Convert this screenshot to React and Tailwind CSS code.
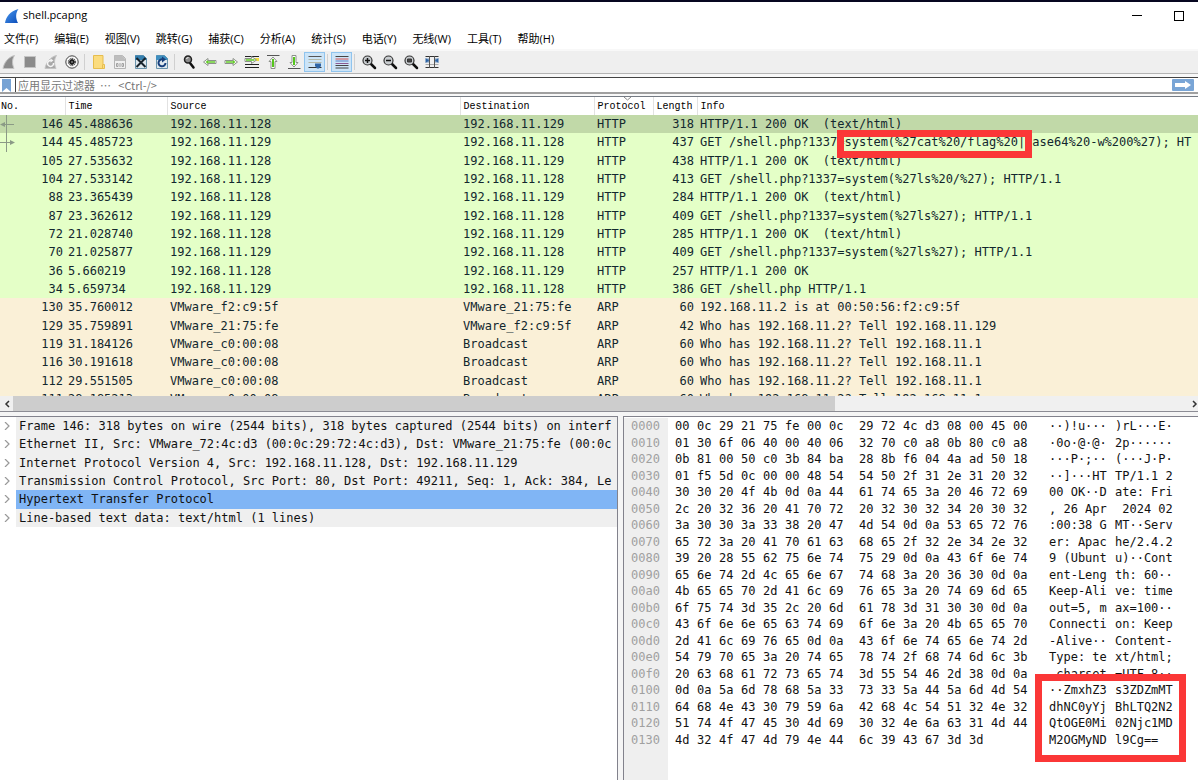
import React, { useState } from "react";
import clsx from "clsx";

const menus = [
  "文件(F)",
  "编辑(E)",
  "视图(V)",
  "跳转(G)",
  "捕获(C)",
  "分析(A)",
  "统计(S)",
  "电话(Y)",
  "无线(W)",
  "工具(T)",
  "帮助(H)",
];

const packets = [
  { no: 146, time: "45.488636", src: "192.168.11.128", dst: "192.168.11.129", proto: "HTTP", len: 318, info: "HTTP/1.1 200 OK  (text/html)" },
  {
    no: 144,
    time: "45.485723",
    src: "192.168.11.129",
    dst: "192.168.11.128",
    proto: "HTTP",
    len: 437,
    info: "GET /shell.php?1337",
    marked: "=system(%27cat%20/flag%20|b",
    rest: "ase64%20-w%200%27); HT",
  },
  { no: 105, time: "27.535632", src: "192.168.11.128", dst: "192.168.11.129", proto: "HTTP", len: 438, info: "HTTP/1.1 200 OK  (text/html)" },
  { no: 104, time: "27.533142", src: "192.168.11.129", dst: "192.168.11.128", proto: "HTTP", len: 413, info: "GET /shell.php?1337=system(%27ls%20/%27); HTTP/1.1" },
  { no: 88, time: "23.365439", src: "192.168.11.128", dst: "192.168.11.129", proto: "HTTP", len: 284, info: "HTTP/1.1 200 OK  (text/html)" },
  { no: 87, time: "23.362612", src: "192.168.11.129", dst: "192.168.11.128", proto: "HTTP", len: 409, info: "GET /shell.php?1337=system(%27ls%27); HTTP/1.1" },
  { no: 72, time: "21.028740", src: "192.168.11.128", dst: "192.168.11.129", proto: "HTTP", len: 285, info: "HTTP/1.1 200 OK  (text/html)" },
  { no: 70, time: "21.025877", src: "192.168.11.129", dst: "192.168.11.128", proto: "HTTP", len: 409, info: "GET /shell.php?1337=system(%27ls%27); HTTP/1.1" },
  { no: 36, time: "5.660219", src: "192.168.11.128", dst: "192.168.11.129", proto: "HTTP", len: 257, info: "HTTP/1.1 200 OK" },
  { no: 34, time: "5.659734", src: "192.168.11.129", dst: "192.168.11.128", proto: "HTTP", len: 386, info: "GET /shell.php HTTP/1.1" },
  { no: 130, time: "35.760012", src: "VMware_f2:c9:5f", dst: "VMware_21:75:fe", proto: "ARP", len: 60, info: "192.168.11.2 is at 00:50:56:f2:c9:5f" },
  { no: 129, time: "35.759891", src: "VMware_21:75:fe", dst: "VMware_f2:c9:5f", proto: "ARP", len: 42, info: "Who has 192.168.11.2? Tell 192.168.11.129" },
  { no: 119, time: "31.184126", src: "VMware_c0:00:08", dst: "Broadcast", proto: "ARP", len: 60, info: "Who has 192.168.11.2? Tell 192.168.11.1" },
  { no: 116, time: "30.191618", src: "VMware_c0:00:08", dst: "Broadcast", proto: "ARP", len: 60, info: "Who has 192.168.11.2? Tell 192.168.11.1" },
  { no: 112, time: "29.551505", src: "VMware_c0:00:08", dst: "Broadcast", proto: "ARP", len: 60, info: "Who has 192.168.11.2? Tell 192.168.11.1" },
  { no: 111, time: "28.185213", src: "VMware_c0:00:08", dst: "Broadcast", proto: "ARP", len: 60, info: "Who has 192.168.11.2? Tell 192.168.11.1" },
];

const details = [
  "Frame 146: 318 bytes on wire (2544 bits), 318 bytes captured (2544 bits) on interf",
  "Ethernet II, Src: VMware_72:4c:d3 (00:0c:29:72:4c:d3), Dst: VMware_21:75:fe (00:0c",
  "Internet Protocol Version 4, Src: 192.168.11.128, Dst: 192.168.11.129",
  "Transmission Control Protocol, Src Port: 80, Dst Port: 49211, Seq: 1, Ack: 384, Le",
  "Hypertext Transfer Protocol",
  "Line-based text data: text/html (1 lines)",
];

const dump = [
  ["0000", "00 0c 29 21 75 fe 00 0c 29 72 4c d3 08 00 45 00", "··)!u···", ")rL···E·"],
  ["0010", "01 30 6f 06 40 00 40 06 32 70 c0 a8 0b 80 c0 a8", "·0o·@·@·", "2p······"],
  ["0020", "0b 81 00 50 c0 3b 84 ba 28 8b f6 04 4a ad 50 18", "···P·;··", "(···J·P·"],
  ["0030", "01 f5 5d 0c 00 00 48 54 54 50 2f 31 2e 31 20 32", "··]···HT", "TP/1.1 2"],
  ["0040", "30 30 20 4f 4b 0d 0a 44 61 74 65 3a 20 46 72 69", "00 OK··D", "ate: Fri"],
  ["0050", "2c 20 32 36 20 41 70 72 20 32 30 32 34 20 30 32", ", 26 Apr", " 2024 02"],
  ["0060", "3a 30 30 3a 33 38 20 47 4d 54 0d 0a 53 65 72 76", ":00:38 G", "MT··Serv"],
  ["0070", "65 72 3a 20 41 70 61 63 68 65 2f 32 2e 34 2e 32", "er: Apac", "he/2.4.2"],
  ["0080", "39 20 28 55 62 75 6e 74 75 29 0d 0a 43 6f 6e 74", "9 (Ubunt", "u)··Cont"],
  ["0090", "65 6e 74 2d 4c 65 6e 67 74 68 3a 20 36 30 0d 0a", "ent-Leng", "th: 60··"],
  ["00a0", "4b 65 65 70 2d 41 6c 69 76 65 3a 20 74 69 6d 65", "Keep-Ali", "ve: time"],
  ["00b0", "6f 75 74 3d 35 2c 20 6d 61 78 3d 31 30 30 0d 0a", "out=5, m", "ax=100··"],
  ["00c0", "43 6f 6e 6e 65 63 74 69 6f 6e 3a 20 4b 65 65 70", "Connecti", "on: Keep"],
  ["00d0", "2d 41 6c 69 76 65 0d 0a 43 6f 6e 74 65 6e 74 2d", "-Alive··", "Content-"],
  ["00e0", "54 79 70 65 3a 20 74 65 78 74 2f 68 74 6d 6c 3b", "Type: te", "xt/html;"],
  ["00f0", "20 63 68 61 72 73 65 74 3d 55 54 46 2d 38 0d 0a", " charset", "=UTF-8··"],
  ["0100", "0d 0a 5a 6d 78 68 5a 33 73 33 5a 44 5a 6d 4d 54", "··ZmxhZ3", "s3ZDZmMT"],
  ["0110", "64 68 4e 43 30 79 59 6a 42 68 4c 54 51 32 4e 32", "dhNC0yYj", "BhLTQ2N2"],
  ["0120", "51 74 4f 47 45 30 4d 69 30 32 4e 6a 63 31 4d 44", "QtOGE0Mi", "02Njc1MD"],
  ["0130", "4d 32 4f 47 4d 79 4e 44 6c 39 43 67 3d 3d", "M2OGMyND", "l9Cg=="],
];

const Icon = ({ children }) => (
  <svg viewBox="0 0 16 16" className="h-4 w-4" fill="none">
    {children}
  </svg>
);

const FIN = "M1 15C2 9 6 3 14.500 1C11.500 5 11.500 10 14 15Z";
const ARROW_LEFT = "M1.500 8L6 4.500V6.500H14V9.500H6V11.500Z";
const ARROW_RIGHT = "M14.500 8L10 4.500V6.500H2V9.500H10V11.500Z";

const Lens = ({ children }) => (
  <Icon>
    <path d="M9.500 9.500L14 14" stroke="#111" strokeWidth="2.500" strokeLinecap="round" />
    <circle cx="6.500" cy="6.500" r="4.500" fill="#c9cdd0" stroke="#333" strokeWidth="1.200" />
    {children}
  </Icon>
);

const toolGroups = [
  [
    {
      label: "Start capture",
      icon: (
        <Icon>
          <path d="M2 14.500C3 9 7 3 13.500 1.500C11 5 11 10 13 14.500Z" fill="#8b8b8b" stroke="#c4c4c4" />
        </Icon>
      ),
    },
    {
      label: "Stop capture",
      icon: (
        <Icon>
          <rect x="2.500" y="2.500" width="11" height="11" fill="#8b8b8b" stroke="#c4c4c4" />
        </Icon>
      ),
    },
    {
      label: "Restart capture",
      icon: (
        <Icon>
          <path d="M2 14.500C3 9 7 3 13.500 1.500C11 5 11 10 13 14.500Z" fill="#a8a8a8" stroke="#c4c4c4" />
          <path d="M10.500 9A3 3 0 1 1 8 6.500" stroke="#f5f5f5" strokeWidth="1.500" />
          <path d="M7.500 4.500L10.500 6.500L7.500 8.500Z" fill="#f5f5f5" />
        </Icon>
      ),
    },
    {
      label: "Capture options",
      icon: (
        <Icon>
          <circle cx="8" cy="8" r="6.200" fill="#f8f8f8" stroke="#444" />
          <circle cx="8" cy="8" r="3.600" stroke="#222" strokeWidth="1" strokeDasharray="1.400 .9" />
          <circle cx="8" cy="8" r="2.400" fill="#1a1a1a" stroke="#1a1a1a" />
          <circle cx="8" cy="8" r="1.100" fill="#777" />
        </Icon>
      ),
    },
  ],
  [
    {
      label: "Open",
      icon: (
        <Icon>
          <path d="M2.500 1.500H12V10.500H13.500V14.500H2.500Z" fill="#fbdc7e" stroke="#e6bd4e" />
          <path d="M11.500 10.500V14" stroke="#e6bd4e" />
        </Icon>
      ),
    },
    {
      label: "Save",
      icon: (
        <Icon>
          <path d="M2.500 1.500H10.500L13.500 4.500V14.500H2.500Z" fill="#f0f0f0" stroke="#b5b5b5" />
          <path d="M2.500 1.500H10L13 4.500V7H2.500Z" fill="#bdbdbd" />
          <path d="M4.500 9.500h1.500v3h-1.500zM8 9v4M10 9.500h1.500v3h-1.500z" stroke="#a0a0a0" />
        </Icon>
      ),
    },
    {
      label: "Close",
      icon: (
        <Icon>
          <path d="M2.500 1.500H10.500L13.500 4.500V14.500H2.500Z" fill="#dfe8ee" stroke="#6a94ac" />
          <path d="M2 1.500H10.500L13.500 4.500V6H2Z" fill="#357fae" />
          <path d="M3.500 4L12.500 13M12.500 4L3.500 13" stroke="#18232b" strokeWidth="2" />
        </Icon>
      ),
    },
    {
      label: "Reload",
      icon: (
        <Icon>
          <path d="M2.500 1.500H10.500L13.500 4.500V14.500H2.500Z" fill="#dfe8ee" stroke="#6a94ac" />
          <path d="M2 1.500H10.500L13.500 4.500V6H2Z" fill="#3f8fc0" />
          <path d="M11.500 9A3.500 3.500 0 1 1 9 5.500" stroke="#173f7c" strokeWidth="2" />
          <path d="M8 2.500L12 5.500L8 8.500Z" fill="#173f7c" />
        </Icon>
      ),
    },
  ],
  [
    {
      label: "Find packet",
      icon: (
        <Icon>
          <path d="M9 9L12.500 13.500" stroke="#111" strokeWidth="2.500" strokeLinecap="round" />
          <circle cx="7" cy="5.500" r="3.500" fill="#8c8c8c" stroke="#222" strokeWidth="1.500" />
          <path d="M5.500 5A2 2 0 0 1 7.500 3.500" stroke="#f4f4f4" />
        </Icon>
      ),
    },
    {
      label: "Previous packet",
      icon: (
        <Icon>
          <path d={ARROW_LEFT} fill="#fff" stroke="#8b9089" />
          <path d="M3.500 8L6 6V7.200H13V8.800H6V10Z" fill="#63cc2a" />
        </Icon>
      ),
    },
    {
      label: "Next packet",
      icon: (
        <Icon>
          <path d={ARROW_RIGHT} fill="#fff" stroke="#8b9089" />
          <path d="M12.500 8L10 6V7.200H3V8.800H10V10Z" fill="#63cc2a" />
        </Icon>
      ),
    },
    {
      label: "Go to packet",
      icon: (
        <Icon>
          <path d="M1 2.500H15M1 10.500H15M1 13.500H15" stroke="#222" strokeWidth="1.200" />
          <path d="M10 5.500H15" stroke="#f2dc3c" strokeWidth="3" />
          <path d="M1 4.500H7.500V2.500L12.500 6L7.500 9.500V7.500H1Z" fill="#fff" stroke="#8b9089" />
          <path d="M2 6H10.500" stroke="#63cc2a" strokeWidth="1.600" />
        </Icon>
      ),
    },
    {
      label: "First packet",
      icon: (
        <Icon>
          <path d="M2 1.500H14.500" stroke="#555" />
          <path d="M8 3L12 7.500H10V14.500H6V7.500H4Z" fill="#fff" stroke="#8b9089" />
          <path d="M8 5V13" stroke="#55c61c" strokeWidth="2" />
        </Icon>
      ),
    },
    {
      label: "Last packet",
      icon: (
        <Icon>
          <path d="M2 14.500H14.500" stroke="#555" />
          <path d="M8 13L12 8.500H10V1.500H6V8.500H4Z" fill="#fff" stroke="#8b9089" />
          <path d="M8 3V11" stroke="#55c61c" strokeWidth="2" />
        </Icon>
      ),
    },
    {
      label: "Auto scroll",
      active: true,
      icon: (
        <Icon>
          <path d="M1.500 2.500H14.500" stroke="#555" />
          <path d="M1.500 5.500H14.500M1.500 8.500H14.500" stroke="#b4b8a8" />
          <path d="M1.500 13.500H14.500" stroke="#333" />
          <path d="M8 9.500H14V12L12 14.500H10L8 12Z" fill="#2f65a5" />
        </Icon>
      ),
    },
  ],
  [
    {
      label: "Colorize",
      active: true,
      icon: (
        <Icon>
          <path d="M1.500 2.500H14.500M1.500 11.500H14.500M1.500 14H14.500" stroke="#444" />
          <path d="M1.500 5H14.500" stroke="#d8504f" />
          <path d="M1.500 7H14.500" stroke="#5a80c6" />
          <path d="M1.500 9.500H14.500" stroke="#8a5b93" />
        </Icon>
      ),
    },
  ],
  [
    { label: "Zoom in", icon: <Lens><path d="M4 6.500H9M6.500 4V9" stroke="#111" strokeWidth="1.500" /></Lens> },
    { label: "Zoom out", icon: <Lens><path d="M4 6.500H9" stroke="#111" strokeWidth="1.500" /></Lens> },
    { label: "Normal size", icon: <Lens><path d="M4.500 5H8.500V8H4.500Z" fill="#444" stroke="#333" /></Lens> },
    {
      label: "Resize columns",
      icon: (
        <Icon>
          <path d="M1.500 2.500H14.500M1.500 13.500H14.500" stroke="#333" strokeWidth="1.200" />
          <path d="M1.500 10.500H14.500" stroke="#aaa" />
          <path d="M5.500 2V14M10.500 2V14" stroke="#555" />
          <path d="M1.500 4V9L5 6.500ZM14.500 4V9L11 6.500Z" fill="#2f65a5" />
          <path d="M2 4.500H5V8.500H2ZM11 4.500H14V8.500H11Z" fill="#2f65a5" opacity=".6" />
        </Icon>
      ),
    },
  ],
];

const TitleBar = () => (
  <header className="flex h-[29px] items-center justify-between border-t-2 border-[#070720] pl-1 font-['Open_Sans',sans-serif]">
    <div className="flex items-center gap-[3px]">
      <svg viewBox="0 0 16 16" className="h-4 w-4">
        <defs>
          <linearGradient id="fin" x1="0" y1="0" x2="1" y2="1">
            <stop offset="0" stopColor="#4d9bf0" />
            <stop offset="1" stopColor="#0b4cb8" />
          </linearGradient>
        </defs>
        <path d={FIN} fill="url(#fin)" />
      </svg>
      <h1 className="text-[11px]">shell.pcapng</h1>
    </div>
    <div className="flex items-center gap-6">
      <button aria-label="Minimize" className="flex h-6 w-5 items-center justify-center">
        <span className="h-px w-[10px] bg-black"></span>
      </button>
      <button aria-label="Maximize" className="flex h-6 w-[27px] items-center justify-start pl-[3px]">
        <span className="h-[10px] w-[10px] border border-black"></span>
      </button>
    </div>
  </header>
);

const MenuBar = () => (
  <nav className="flex h-5 items-center gap-4 pl-1 font-['Open_Sans','Noto_Sans_CJK_SC',sans-serif] text-[11px] leading-4">
    {menus.map((menu) => (
      <button key={menu} className="whitespace-nowrap">
        {menu}
      </button>
    ))}
  </nav>
);

const ToolBar = () => (
  <div role="toolbar" className="flex h-[25px] items-center border-t-2 border-b border-t-[#f8f8f8] border-b-[#b4b4b4] bg-[#efefef]">
    <div className="-ml-[2px] flex items-center">
      {toolGroups.map((group, i) => (
        <React.Fragment key={i}>
          {i > 0 && <span className="mx-[2px] h-4 w-[2px] border-l border-[#d0d0d0]"></span>}
          {group.map((tool) => (
            <button
              key={tool.label}
              aria-label={tool.label}
              className={clsx(
                "flex h-5 w-[21px] items-center justify-center",
                tool.active && "border border-[#90c4ee] bg-[#cce4f7]"
              )}
            >
              {tool.icon}
            </button>
          ))}
        </React.Fragment>
      ))}
    </div>
  </div>
);

const FilterBar = () => {
  const [filter, setFilter] = useState("");

  return (
    <div className="border-b border-[#757b84] bg-[#f8f8f8] pt-[3px] pb-[2px]">
      <form
        className="flex h-[17px] items-center border-t border-b-2 border-t-[#444] border-b-[#a0a0a0] bg-white pr-1"
        onSubmit={(e) => e.preventDefault()}
      >
        <button type="button" aria-label="Bookmarks" className="flex h-full w-4 items-center justify-center border-r border-[#444] pr-[2px]">
          <svg viewBox="0 0 9 13" className="h-[13px] w-[9px]">
            <path d="M0 0H9V13L4.500 9L0 13Z" fill="#77a3d4" />
          </svg>
        </button>
        <input
          type="text"
          aria-label="Display filter"
          value={filter}
          onChange={(e) => setFilter(e.target.value)}
          placeholder="应用显示过滤器  …   <Ctrl-/>"
          className="h-full min-w-0 flex-1 pl-[2px] font-['Noto_Sans_CJK_SC',sans-serif] text-[11px] placeholder-[#777] outline-none"
        />
        <button type="submit" aria-label="Apply filter" className="flex h-3 w-[22px] items-center justify-center rounded-[1px] bg-[#79a5d6]">
          <svg viewBox="0 0 16 8" className="h-2 w-4">
            <path d="M0 2H10V0L16 4L10 8V6H0Z" fill="#fff" />
          </svg>
        </button>
      </form>
    </div>
  );
};

const RelatedMarks = () => (
  <svg viewBox="0 0 15 37" className="absolute top-0 left-0 h-[37px] w-[15px]" fill="none">
    <path d="M6.500 0V37M2 9.500H14M0 27.500H11" stroke="#8b9a86" />
    <path d="M0 9.500L5 7V12ZM15 27.500L10 25V30Z" fill="#8b9a86" />
  </svg>
);

const PacketList = () => {
  const [selected, setSelected] = useState(146);

  return (
    <section className="border-b border-[#8c8c94]">
      <div className="h-[299px] overflow-hidden">
        <table className="w-full table-fixed border-collapse">
          <colgroup>
            <col className="w-[65px]" />
            <col className="w-[102px]" />
            <col className="w-[293px]" />
            <col className="w-[134px]" />
            <col className="w-[59px]" />
            <col className="w-[44px]" />
            <col />
          </colgroup>
          <thead>
            <tr className="h-[18px] text-left font-['Liberation_Mono',monospace] text-[10px] leading-4 [&>th]:p-0 [&>th]:pt-[2px] [&>th]:pl-[3px] [&>th]:font-normal [&>th+th]:border-l [&>th+th]:border-[#e2e2e2]">
              <th className="!pl-[1px]">No.</th>
              <th>Time</th>
              <th>Source</th>
              <th>Destination</th>
              <th className="relative">
                Protocol
                <svg viewBox="0 0 7 4" className="absolute top-0 left-1/2 h-1 w-[7px]" fill="none">
                  <path d="M0 0L3.500 3L7 0" stroke="#888" />
                </svg>
              </th>
              <th>Length</th>
              <th>Info</th>
            </tr>
          </thead>
        </table>
        {/* the row heights share the height of the table */}
        <table className="h-[293px] w-full table-fixed border-collapse font-['DejaVu_Sans_Mono',monospace] text-[12px] leading-4 text-[#12272e]">
          <colgroup>
            <col className="w-[65px]" />
            <col className="w-[102px]" />
            <col className="w-[293px]" />
            <col className="w-[134px]" />
            <col className="w-[59px]" />
            <col className="w-[44px]" />
            <col />
          </colgroup>
          <tbody>
            {packets.map((p) => (
              <tr
                key={p.no}
                onClick={() => setSelected(p.no)}
                className={clsx(
                  "[&>td]:p-0 [&>td]:pl-[3px] [&>td]:whitespace-pre",
                  p.no === selected ? "bg-[#c1d9a8]" : p.proto === "HTTP" ? "bg-[#e4ffc7]" : "bg-[#faf0d7]"
                )}
              >
                <td className="relative !pr-[2px] text-right">
                  {p.no === 146 && <RelatedMarks />}
                  {p.no}
                </td>
                <td>{p.time}</td>
                <td>{p.src}</td>
                <td>{p.dst}</td>
                <td>{p.proto}</td>
                <td className="!pr-[3px] text-right">{p.len}</td>
                <td>
                  {p.info}
                  {p.marked && (
                    <span className="relative">
                      {p.marked}
                      <span className="absolute inset-x-0 -top-[5px] h-7 border-[7px] border-[#fb3737]"></span>
                    </span>
                  )}
                  {p.rest}
                </td>
              </tr>
            ))}
          </tbody>
        </table>
      </div>
      <div className="flex h-[15px] items-stretch bg-[#f0f0f0]">
        <button aria-label="Scroll left" className="flex w-[13px] items-center justify-center">
          <svg viewBox="0 0 6 8" className="h-2 w-[6px]" fill="none">
            <path d="M5 1L2 4L5 7" stroke="#333" strokeWidth="1.500" />
          </svg>
        </button>
        <div className="flex-1">
          <div className="h-full w-[70%] bg-[#cdcdcd]"></div>
        </div>
        <button aria-label="Scroll right" className="flex w-[11px] items-center justify-end">
          <svg viewBox="0 0 6 8" className="h-2 w-[6px]" fill="none">
            <path d="M1 1L4 4L1 7" stroke="#333" strokeWidth="1.500" />
          </svg>
        </button>
      </div>
    </section>
  );
};

const DetailTree = () => {
  const [active, setActive] = useState(4);

  return (
    <section className="min-w-0 overflow-hidden border-t border-r border-[#82828c] bg-white">
      <ul className="grid h-[110px] grid-rows-6 font-['DejaVu_Sans_Mono',monospace] text-[12px] leading-4 text-[#111]">
        {details.map((line, i) => (
          <li key={line} className="flex min-w-0">
            <button aria-label="Expand" className="flex w-4 shrink-0 items-center justify-start pl-1">
              <svg viewBox="0 0 6 8" className="h-2 w-[6px]" fill="none">
                <path d="M1 0L5 4L1 8" stroke="#999" strokeWidth="1.200" />
              </svg>
            </button>
            <button
              onClick={() => setActive(i)}
              className={clsx(
                "min-w-0 flex-1 overflow-hidden pl-[3px] text-left whitespace-pre",
                i === active ? "bg-[#80b5f5]" : "bg-[#efefef]"
              )}
            >
              {line}
            </button>
          </li>
        ))}
      </ul>
    </section>
  );
};

const HexDump = () => (
  <section className="flex min-w-0 flex-col overflow-hidden border-t border-l border-[#82828c] bg-white pt-px">
    <table className="h-[330px] table-fixed border-collapse self-start font-['DejaVu_Sans_Mono',monospace] text-[12px] leading-4 text-[#111]">
      <tbody>
        {dump.map(([offset, bytes, left, right]) => {
          const cells = bytes.split(" ");
          return (
            <tr key={offset} className="[&>td]:p-0 [&>td]:whitespace-pre">
              <th className="w-11 min-w-11 bg-[#efefef] p-0 pl-[7px] text-left font-normal text-[#a0a0a0]">{offset}</th>
              {Array.from({ length: 16 }, (_, i) => (
                <td
                  key={i}
                  className={clsx(
                    i === 0 && "w-[29px] min-w-[29px] !pl-[7px]",
                    i === 8 && "w-[30px] min-w-[30px] !pl-2",
                    i !== 0 && i !== 8 && "w-[22px] min-w-[22px]"
                  )}
                >
                  {cells[i]}
                </td>
              ))}
              <td className="relative w-20 min-w-20 !pl-[14px]">
                {left}
                {offset === "0100" && (
                  <span className="absolute -top-2 left-0 h-[88px] w-[151px] border-[7px] border-[#fb3737]"></span>
                )}
              </td>
              <td>{right}</td>
            </tr>
          );
        })}
      </tbody>
    </table>
    <div className="w-11 flex-1 bg-[#efefef]"></div>
  </section>
);

const App = () => {
  return (
    <main className="flex min-h-screen flex-col overflow-hidden bg-white text-black">
      <TitleBar />
      <MenuBar />
      <ToolBar />
      <FilterBar />
      <PacketList />
      <div className="grid flex-1 grid-cols-[618fr_575fr] gap-[5px] bg-[#f5f5f5] pt-1">
        <DetailTree />
        <HexDump />
      </div>
    </main>
  );
};

export default App;
